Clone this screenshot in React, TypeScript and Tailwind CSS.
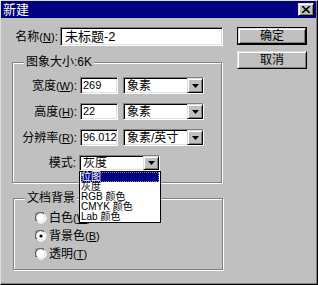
const SUNKEN =
  "border border-t-[#808080] border-l-[#808080] border-b-white border-r-white shadow-[inset_1px_1px_0_#000,inset_-1px_-1px_0_#dfdfdf]";
const RAISED =
  "border border-t-[#dfdfdf] border-l-[#dfdfdf] border-b-black border-r-black shadow-[inset_1px_1px_0_#fff,inset_-1px_-1px_0_#808080]";
const GROUP =
  "relative border border-[#808080] shadow-[inset_1px_1px_0_#fff,1px_1px_0_#fff]";

// accelerator key, e.g. (W) with W underlined
function U({ c }: { c: string }) {
  return (
    <span className="text-[11px]">
      (<span className="underline underline-offset-1">{c}</span>)
    </span>
  );
}

function DropButton() {
  return (
    <div className={`ml-auto w-[16px] h-full bg-[#c0c0c0] flex items-center justify-center ${RAISED}`}>
      <svg width="7" height="4" viewBox="0 0 7 4">
        <path d="M0 0h7L3.5 4z" fill="#000" />
      </svg>
    </div>
  );
}

function Radio({ checked }: { checked?: boolean }) {
  return (
    <svg width="12" height="12" viewBox="0 0 12 12" className="shrink-0">
      <path d="M1 9 A5.5 5.5 0 0 1 9 1" stroke="#808080" strokeWidth="1" fill="none" />
      <circle cx="6" cy="6" r="5" fill="#fff" />
      <path d="M2 9 A4.5 4.5 0 0 1 9 2" stroke="#404040" strokeWidth="1" fill="none" />
      <path d="M10.5 3 A5.5 5.5 0 0 1 3 10.5" stroke="#fff" strokeWidth="1" fill="none" />
      <path d="M9.5 3.5 A4.5 4.5 0 0 1 3.5 9.5" stroke="#dfdfdf" strokeWidth="1" fill="none" />
      {checked && <circle cx="6" cy="6" r="1.6" fill="#000" />}
    </svg>
  );
}

const MODES = ["灰度", "RGB 颜色", "CMYK 颜色", "Lab 颜色"];

export default function App() {
  return (
    <div className="w-[318px] h-[285px] bg-[#c0c0c0] border-t border-l border-[#dfdfdf] border-r border-r-black border-b border-b-black shadow-[inset_-1px_-1px_0_#808080] text-black text-[12px] leading-none font-['Liberation_Sans','Noto_Sans_CJK_SC',sans-serif] overflow-hidden">
      {/* Title bar */}
      <div className="h-[17px] mr-[1px] bg-[#000080] flex items-center pl-[2px] pr-[2px]">
        <span className="text-white text-[13px]">新建</span>
        <div className={`ml-auto w-[16px] h-[13px] bg-[#c0c0c0] flex items-center justify-center ${RAISED}`}>
          <svg width="8" height="7" viewBox="0 0 8 7">
            <path d="M0 0l8 7M8 0L0 7" stroke="#000" strokeWidth="1.6" />
          </svg>
        </div>
      </div>

      <div className="flex pt-[9px] pl-[11px]">
        {/* Left column */}
        <div className="w-[211px] flex flex-col">
          <div className="flex items-center h-[19px]">
            <span className="w-[48px] pr-[2px] text-right whitespace-nowrap">
              名称<U c="N" />:
            </span>
            <div className={`w-[163px] h-[19px] bg-white flex items-center pl-[4px] text-[13px] ${SUNKEN}`}>
              未标题-2
            </div>
          </div>

          {/* Image size group */}
          <div className={`mt-[16px] w-[210px] h-[121px] ${GROUP}`}>
            <span className="absolute left-[11px] -top-[7px] px-[2px] bg-[#c0c0c0]">图象大小:6K</span>
            <div className="flex flex-col gap-[9px] pt-[14px]">
              {[
                { l: "宽度", k: "W", v: "269", u: "象素" },
                { l: "高度", k: "H", v: "22", u: "象素" },
                { l: "分辨率", k: "R", v: "96.012", u: "象素/英寸" },
              ].map((r) => (
                <div key={r.k} className="flex items-center h-[17px]">
                  <span className="w-[65px] pr-[1px] text-right whitespace-nowrap">
                    {r.l}
                    <U c={r.k} />:
                  </span>
                  <div className={`ml-[2px] w-[38px] h-[17px] bg-white flex items-center pl-[2px] text-[11px] ${SUNKEN}`}>
                    {r.v}
                  </div>
                  <div className={`ml-[5px] w-[81px] h-[17px] bg-white flex items-center pl-[3px] ${SUNKEN}`}>
                    {r.u}
                    <DropButton />
                  </div>
                </div>
              ))}
              <div className="flex items-center h-[16px]">
                <span className="w-[63px] text-right">模式:</span>
                <div className="relative ml-[3px]">
                  <div className={`w-[81px] h-[16px] bg-white flex items-center pl-[3px] ${SUNKEN}`}>
                    灰度
                    <DropButton />
                  </div>
                  {/* Open list */}
                  <div className="absolute left-0 top-full w-[82px] bg-white border border-black z-10 flex flex-col text-[10px] leading-[10px]">
                    <span className="h-[10px] mx-[1px] bg-[#000080] text-white outline outline-dotted outline-1 -outline-offset-1 outline-[#8080c0]">
                      位图
                    </span>
                    {MODES.map((m) => (
                      <span key={m} className="h-[10px] pl-[1px] whitespace-nowrap">
                        {m}
                      </span>
                    ))}
                  </div>
                </div>
              </div>
            </div>
          </div>

          {/* Background group */}
          <div className={`mt-[15px] ml-[1px] w-[210px] h-[72px] ${GROUP}`}>
            <span className="absolute left-[11px] -top-[7px] px-[2px] bg-[#c0c0c0]">文档背景</span>
            <div className="flex flex-col gap-[4px] pt-[12px] pl-[21px]">
              {[
                { l: "白色", k: "W" },
                { l: "背景色", k: "B", c: true },
                { l: "透明", k: "T" },
              ].map((r) => (
                <div key={r.k} className="flex items-center gap-[2px] h-[14px]">
                  <Radio checked={r.c} />
                  <span className="whitespace-nowrap">
                    {r.l}
                    <U c={r.k} />
                  </span>
                </div>
              ))}
            </div>
          </div>
        </div>

        {/* Buttons */}
        <div className="ml-[14px] w-[70px] flex flex-col gap-[6px]">
          <div className="border border-black h-[18px]">
            <div className={`h-full bg-[#c0c0c0] flex items-center justify-center ${RAISED}`}>确定</div>
          </div>
          <div className={`h-[18px] bg-[#c0c0c0] flex items-center justify-center ${RAISED}`}>取消</div>
        </div>
      </div>
    </div>
  );
}
